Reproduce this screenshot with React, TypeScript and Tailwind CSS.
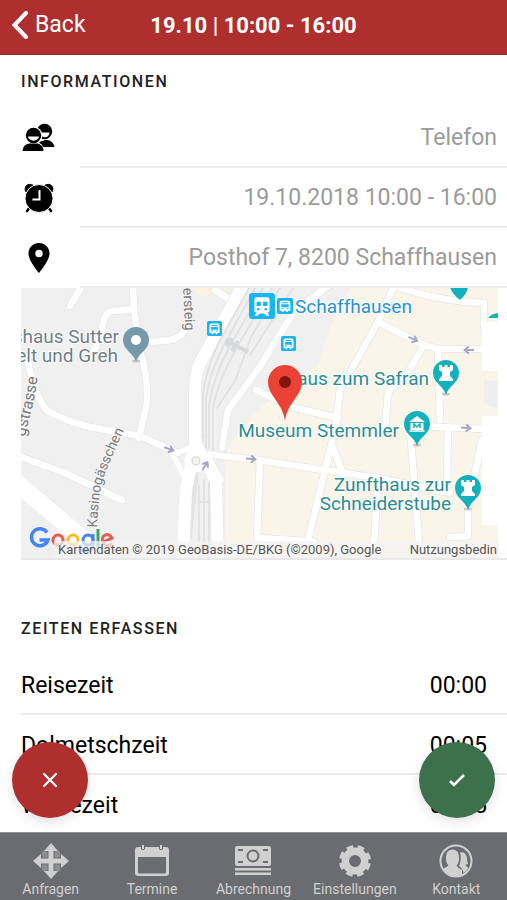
import type { ReactNode } from "react";

const fontStack = "font-['Roboto','Liberation_Sans',sans-serif]";

function GroupIcon() {
  return (
    <svg viewBox="0 0 34 30" className="h-[30px] w-[34px]" aria-hidden="true">
      <circle cx="22.500" cy="8.500" r="7.700" />
      <path d="M18.500 18.500L24 16.800q7.500 1 8.500 7.200H21q-1-3-4-4z" />
      <path d="M19 9.500h8.500c0 5-6 6-8 3z" fill="#fff" />
      <circle cx="11.500" cy="12.500" r="9" fill="#fff" />
      <path d="M0 28.500c.5-6 3.500-7.500 7-8.500h8.500c3.500 1 6.500 3 6.500 8.500z" stroke="#fff" />
      <circle cx="11.500" cy="12.500" r="7.700" />
      <path d="M6 13.500h11c-.6 5.500-10.400 5.500-11 0z" fill="#fff" />
    </svg>
  );
}

function AlarmIcon() {
  return (
    <svg viewBox="0 0 34 30" className="h-[30px] w-[34px]" aria-hidden="true">
      <path d="M4 9C1 4 6-1 11.500 2.500zM30 9C33 4 28-1 22.500 2.500z" stroke="#000" strokeLinejoin="round" />
      <path d="M8 24l-3 4M26 24l3 4" stroke="#000" strokeWidth="2.500" strokeLinecap="round" />
      <circle cx="17" cy="15.500" r="14" stroke="#fff" />
      <path d="M17.500 7v9.500h-7" fill="none" stroke="#fff" strokeWidth="2" />
    </svg>
  );
}

function PlaceIcon() {
  return (
    <svg viewBox="0 0 34 30" className="h-[30px] w-[34px]" aria-hidden="true">
      <path fillRule="evenodd" d="M17 0C11 0 6.500 4.500 6.500 10.500 6.500 18 17 30 17 30s10.500-12 10.500-19.500C27.500 4.500 23 0 17 0zm0 14.200a3.700 3.700 0 1 1 0-7.400 3.700 3.700 0 0 1 0 7.400z" />
    </svg>
  );
}

function BusSign({ x, y, size }: { x: number; y: number; size: number }) {
  return (
    <svg x={x} y={y} width={size} height={size} viewBox="0 0 24 24">
      <rect width="24" height="24" rx="3" fill="#16b6f5" />
      <path d="M7 4h10q2 0 2 2v10q0 2-2 2l2 3h-3l-2-2h-4l-2 2H5l2-3q-2 0-2-2V6q0-2 2-2z" fill="#fff" />
      <path d="M7 8h4v4H7zM13 8h4v4h-4z" fill="#16b6f5" />
      <circle cx="8.500" cy="15" r="1.200" fill="#16b6f5" />
      <circle cx="15.500" cy="15" r="1.200" fill="#16b6f5" />
    </svg>
  );
}

function StopSign({ x, y, size }: { x: number; y: number; size: number }) {
  return (
    <svg x={x} y={y} width={size} height={size} viewBox="0 0 24 24">
      <rect width="24" height="24" rx="3" fill="#16b6f5" />
      <path d="M7 4h10q3 0 3 3v12h-3l-1 2h-2v-2h-4v2H8l-1-2H4V7q0-3 3-3z" fill="#fff" />
      <path d="M7 6.500h10V8H7zM6.500 9.500h11V14h-11z" fill="#16b6f5" />
      <path d="M6.500 16h3M14.500 16h3" stroke="#16b6f5" strokeWidth="1.500" />
    </svg>
  );
}

function Marker({ x, y, color, children }: { x: number; y: number; color: string; children: ReactNode }) {
  return (
    <g transform={`translate(${x} ${y})`}>
      <ellipse cx="0" cy="21" rx="4" ry="1.500" fill="#9aa0a6" opacity="0.5" />
      <path d="M0 22C-2 13-13 10-13 0a13 13 0 0 1 26 0C13 10 2 13 0 22z" fill={color} />
      {children}
    </g>
  );
}

function Tower() {
  return <path d="M-7-8h3v2h2.500v-2h3v2H4v-2h3v5L4-1v4l3 3v2H-7V6l3-3v-4l-3-2z" fill="#fff" />;
}

const roadPaths = [
  "M82 286L70 306",
  "M133 286L134 310Q137 330 140 350Q148 375 147 402L139 438",
  "M134 309L112 311Q104 312 102 330L94 352",
  "M152 342L170 340Q182 338 186 326",
  "M28 362Q36 400 48 411Q62 420 90 427L140 436L178 453",
  "M21 457L65 473L122 500",
  "M215 290L232 301",
];

const townPaths = [
  "M394 286L378 322L340 390L336 424L330 450L306 548",
  "M378 322L424 345L438 349L482 349",
  "M424 345L407 374L388 392L385 430",
  "M438 349L440 420",
  "M395 286Q440 302 484 303V330",
  "M256 390L292 407L338 418",
  "M206 454L258 460L323 470L378 478L450 493",
  "M333 447L343 474",
  "M260 460L257 538L292 540L314 542",
  "M410 430L415 490L420 558",
  "M448 430L447 485",
  "M378 478L374 545",
  "M420 426L482 429",
  "M482 440L476 468L468 510V536L450 537",
  "M328 286L294 312L259 368L228 410L222 448",
];

function DirectionArrow({ x, y, angle }: { x: number; y: number; angle: number }) {
  return (
    <path
      d="M-5 0H4M0-3.500L4.500 0L0 3.500"
      fill="none"
      stroke="#a6a4c4"
      strokeWidth="2"
      transform={`translate(${x} ${y}) rotate(${angle})`}
    />
  );
}

function LocationMap() {
  return (
    <svg
      viewBox="21 288 478 270"
      preserveAspectRatio="xMidYMid slice"
      className="block h-[270px] w-full"
      role="img"
      aria-label="Karte: Posthof 7, 8200 Schaffhausen"
    >
      <rect x="21" y="288" width="478" height="270" fill="#f0f0f0" />
      <path d="M350 288H498V558H226V470Q222 448 240 432Q262 400 318 365Q330 320 350 288z" fill="#f9f5e8" />
      <path d="M190 288h38l-10 8-20-1z" fill="#f9f3df" />
      <path d="M484 380q8 2 14 0v28q-8 0-14-6z" fill="#eeeeee" />

      <g fill="none" strokeLinejoin="round" strokeLinecap="round">
        <g stroke="#e6e6e8" strokeWidth="8">
          {roadPaths.map((d) => <path key={d} d={d} />)}
          {townPaths.map((d) => <path key={d} d={d} />)}
        </g>
        <path d="M10 477L90 545" stroke="#fff" strokeWidth="17" />
        <g stroke="#fff" strokeWidth="6.500">
          {roadPaths.map((d) => <path key={d} d={d} />)}
          {townPaths.map((d) => <path key={d} d={d} />)}
        </g>
        <path d="M246 280L205 354Q195 368 195 390V450" stroke="#e4e4e6" strokeWidth="13" />
        <path d="M196 440L183 558M198 448L216 482L218 558" stroke="#e4e4e6" strokeWidth="13" />
        <path d="M246 280L205 354Q195 368 195 390V450" stroke="#fff" strokeWidth="12" />
        <path d="M196 440L186 490L183 558M198 448L216 482L218 558" stroke="#fff" strokeWidth="12" />
        <path d="M171 451L184 476M176 453L190 448M208 456L221 480" stroke="#fff" strokeWidth="5" />
        <circle cx="196" cy="461" r="11" fill="#fff" stroke="#fff" />
        <circle cx="196" cy="461" r="4" fill="#f7f5ec" stroke="#dcdcdc" strokeWidth="1.500" />
        <g stroke="#dfe1e3" strokeWidth="1.800">
          <path d="M249 288L219 342Q205 372 203 395V440" />
          <path d="M255 288L224 345Q209 374 206 398V448" />
          <path d="M263 288L230 346Q214 375 209 405V448" />
          <path d="M272 288L237 347Q216 385 213 410V450" />
          <path d="M280 288L251 337L236 379L217 408" />
          <path d="M293 288L257 344L250 355" />
          <path d="M199 486V558M204 480V558M209 482V558M199 502H210" />
        </g>
        <path d="M226 340L248 352M232 338L226 346M238 341L232 351" stroke="#d6d8da" strokeWidth="4" strokeLinecap="butt" />
      </g>

      <path d="M482 322H499V371H482zM482 416H499V525H482z" fill="#fff" />
      <rect x="498" y="288" width="1" height="270" fill="#fff" />
      <path d="M498 313q-7 1-10 5h10z" fill="#12b1bd" />
      <path d="M450 287h18q-1 7-8 13-8-6-10-13z" fill="#12b1bd" />

      <DirectionArrow x={169} y={449} angle={20} />
      <DirectionArrow x={205} y={466} angle={-58} />
      <DirectionArrow x={251} y={459} angle={5} />
      <DirectionArrow x={413} y={339} angle={25} />
      <DirectionArrow x={469} y={350} angle={180} />
      <DirectionArrow x={466} y={428} angle={5} />

      <defs>
        <path id="kasino-line" d="M97 528Q98 505 101 486Q104 473 124 430" />
        <path id="strasse-line" d="M25 437Q29 420 33 404Q37 388 39 362" />
      </defs>
      <g fill="#7b7b7b" fontSize="14" stroke="#f5f5f5" strokeWidth="2" paintOrder="stroke">
        <text transform="translate(183 288) rotate(87)">ersteig</text>
        <text fontSize="16"><textPath href="#strasse-line">gstrasse</textPath></text>
        <text><textPath href="#kasino-line">Kasinogässchen</textPath></text>
      </g>

      <g fontSize="19" stroke="#fff" strokeWidth="2" strokeLinejoin="round" paintOrder="stroke">
        <g fill="#6e7f8a" textAnchor="end">
          <text x="119" y="343">shaus Sutter</text>
          <text x="118" y="362">elt und Greh</text>
        </g>
        <text x="295" y="313" fill="#2793d0">Schaffhausen</text>
        <g fill="#2a8d91" textAnchor="end">
          <text x="429" y="385">Haus zum Safran</text>
          <text x="399" y="437">Museum Stemmler</text>
          <text x="451" y="491">Zunfthaus zur</text>
          <text x="451" y="510">Schneiderstube</text>
        </g>
      </g>

      <BusSign x={249} y={293} size={26} />
      <StopSign x={277} y={298} size={16} />
      <StopSign x={281} y={336} size={15} />
      <StopSign x={207} y={321} size={15} />

      <Marker x={136} y={340} color="#7599a8">
        <circle r="5" fill="#fff" />
      </Marker>
      <Marker x={446} y={373} color="#12b1bd"><Tower /></Marker>
      <Marker x={468} y={488} color="#12b1bd"><Tower /></Marker>
      <Marker x={417} y={424} color="#12b1bd">
        <path d="M-8-2L0-8l8 6zM-6.500-1h13v7h-13z" fill="#fff" />
        <path d="M-3 4V0L0 3l3-3v4" fill="none" stroke="#12b1bd" strokeWidth="1.500" />
        <path d="M-7.500 7h15" stroke="#fff" strokeWidth="1.500" />
      </Marker>

      <path d="M285 421C283 403 268 396 268 382a17 17 0 0 1 34 0C302 396 287 403 285 421z" fill="#ea4336" />
      <circle cx="285" cy="382" r="6" fill="#811411" />

      <g fill="none" strokeWidth="3">
        <path d="M47 532.500A8.500 8.500 0 1 0 48 540H39.500" stroke="#4285f4" strokeWidth="3.500" />
        <circle cx="58" cy="540" r="5" stroke="#ea5a4c" />
        <circle cx="73" cy="540" r="5" stroke="#fbbc20" />
        <path d="M93 534V546Q92 551 87 551T82 548" stroke="#4285f4" />
        <circle cx="88" cy="540" r="5" stroke="#4285f4" />
        <path d="M98 529V547" stroke="#34a853" />
        <path d="M103 542L112 538Q109 533 105 535T103 543Q107 548 112 544" stroke="#ea5a4c" />
      </g>
      <rect x="54" y="541" width="445" height="17" fill="#f3f3f3" opacity="0.75" />
      <g fill="#555" fontSize="13">
        <text x="58" y="554">Kartendaten © 2019 GeoBasis-DE/BKG (©2009), Google</text>
        <text x="497" y="554" textAnchor="end">Nutzungsbedin</text>
      </g>
    </svg>
  );
}

const details = [
  { name: "Art", value: "Telefon", icon: <GroupIcon /> },
  { name: "Zeit", value: "19.10.2018 10:00 - 16:00", icon: <AlarmIcon /> },
  { name: "Ort", value: "Posthof 7, 8200 Schaffhausen", icon: <PlaceIcon /> },
];

const times = [
  { id: "reisezeit", label: "Reisezeit", value: "00:00" },
  { id: "dolmetschzeit", label: "Dolmetschzeit", value: "00:05" },
  { id: "wartezeit", label: "Wartezeit", value: "00:05" },
];

const tabs = [
  {
    label: "Anfragen",
    icon: (
      <>
        <path d="M18 0l7 8h-4.500v7.500H28V11l8 7-8 7v-4.500h-7.500V28H25l-7 8-7-8h4.500v-7.500H8V25l-8-7 8-7v4.500h7.500V8H11z" />
        <path d="M8.500 9.500l2-2 4 1.500v5.500H9.500zM27.500 9.500l-2-2-4 1.500v5.500h5zM8.500 26.500l2 2 4-1.500v-5.500H9.500zM27.500 26.500l-2 2-4-1.500v-5.500h5z" opacity="0.35" />
      </>
    ),
  },
  {
    label: "Termine",
    icon: (
      <path fillRule="evenodd" d="M4 4h3v2q2 2 4 0V4h14v2q2 2 4 0V4h3q3 0 3 3v23q0 3-3 3H4q-3 0-3-3V7q0-3 3-3zm0 10v15q0 1.500 1.500 1.500h25Q32 30.500 32 29V14zM8 2h2v4H8zM26 2h2v4h-2z" />
    ),
  },
  {
    label: "Abrechnung",
    icon: (
      <path fillRule="evenodd" d="M2 3h32q2 0 2 2v16q0 2-2 2H2q-2 0-2-2V5q0-2 2-2zm1 3v2h5V6zm25 0v2h5V6zM3 18v2h5v-2zm25 0v2h5v-2zM18 6.500a6.500 6.500 0 1 0 0 13 6.500 6.500 0 0 0 0-13zm0 2a4.500 4.500 0 1 1 0 9 4.500 4.500 0 0 1 0-9zM0 25h36v2.500H0zM0 29.500h36V32H0z" />
    ),
  },
  {
    label: "Einstellungen",
    icon: (
      <g fill="none" stroke="currentColor">
        <circle cx="18" cy="18" r="9.700" strokeWidth="7.400" />
        <circle cx="18" cy="18" r="14" strokeWidth="4" strokeDasharray="6.500 4.496" strokeDashoffset="-2.250" />
      </g>
    ),
  },
  {
    label: "Kontakt",
    icon: (
      <>
        <circle cx="18" cy="18" r="15.500" fill="none" stroke="currentColor" strokeWidth="2" />
        <path d="M5 26q4-2.500 5.500-3.500-3-3-2.500-9 .5-7 6.500-7t6.500 7q.500 6-2.500 9 1 2 5.500 4.500V32q-6 3-12 1-4-2-7-7z" />
        <path d="M22 9.500q6-1 7 5.500 0 4 1 5.500l-2.500 1.500 2.500 3q-1 3-4.500 5-.5-4-4.500-7l1-3q1.500-6 0-10.500z" />
      </>
    ),
  },
];

export default function App() {
  return (
    <div className={`flex h-screen flex-col overflow-hidden bg-white text-black ${fontStack}`}>
      <header className="grid h-[55px] shrink-0 grid-cols-[1fr_auto_1fr] items-center border-b border-[#9c2a2a] bg-[#af2e2e] pb-1 text-white">
        <button type="button" className="flex items-center gap-[7px] pl-3 text-[23px]">
          <svg viewBox="0 0 16 28" className="h-7 w-4" aria-hidden="true">
            <path d="M14 2L2.500 14 14 26" fill="none" stroke="currentColor" strokeWidth="4" strokeLinecap="round" />
          </svg>
          Back
        </button>
        <h1 className="text-[22px] font-bold">19.10 | 10:00 - 16:00</h1>
      </header>

      <div className="relative min-h-0 flex-1">
        <main className="h-full overflow-y-auto [scrollbar-width:none]">
          <section>
            <h2 className="flex h-[53px] items-center px-[21px] text-base font-medium tracking-widest text-[#222]">INFORMATIONEN</h2>
            <dl>
              {details.map((item) => (
                <div key={item.name} className="flex h-[60px] items-center pl-[22px]">
                  <dt className="w-[58px] shrink-0" aria-label={item.name}>{item.icon}</dt>
                  <dd className="flex h-full flex-1 items-center justify-end border-b-2 border-[#ececec] pt-0.5 pr-[10px] text-[23px] text-[#9b9b9b]">
                    {item.value}
                  </dd>
                </div>
              ))}
            </dl>
            <div className="ml-[21px] border-b-2 border-[#e8e8e8] pr-2">
              <LocationMap />
            </div>
          </section>

          <section>
            <h2 className="flex h-[95px] items-center px-[21px] pt-[43px] text-base font-medium tracking-widest text-[#222]">ZEITEN ERFASSEN</h2>
            {times.map((time) => (
              <div key={time.id} className="ml-[21px] flex h-[60px] items-center justify-between border-b-2 border-[#ececec] pt-1 pr-5 text-[23px]">
                <label htmlFor={time.id}>{time.label}</label>
                <input id={time.id} type="text" defaultValue={time.value} className="w-24 bg-transparent text-right outline-none" />
              </div>
            ))}
          </section>
        </main>

        <button type="button" aria-label="Ablehnen" className="absolute bottom-[14px] left-3 flex size-[76px] items-center justify-center rounded-full bg-[#af2e2e] text-white shadow-[0_4px_12px_rgba(0,0,0,0.12)]">
          <svg viewBox="0 0 18 18" className="size-[18px]" aria-hidden="true">
            <path d="M3 3l12 12M15 3L3 15" fill="none" stroke="currentColor" strokeWidth="2.200" strokeLinecap="round" />
          </svg>
        </button>
        <button type="button" aria-label="Bestätigen" className="absolute right-3 bottom-[14px] flex size-[76px] items-center justify-center rounded-full bg-[#3c714b] text-white shadow-[0_4px_12px_rgba(0,0,0,0.12)]">
          <svg viewBox="0 0 18 18" className="size-[18px]" aria-hidden="true">
            <path d="M2 10l4 4L16 4" fill="none" stroke="currentColor" strokeWidth="2.500" />
          </svg>
        </button>
      </div>

      <nav className="grid h-[68px] shrink-0 grid-cols-5 border-t border-[#909193] bg-[#6b6c6f] text-[#d0d0d0]">
        {tabs.map((tab) => (
          <button key={tab.label} type="button" className="flex flex-col items-center pt-[10px] text-[14px] leading-[20px]">
            <svg viewBox="0 0 36 36" className="size-9" fill="currentColor" aria-hidden="true">{tab.icon}</svg>
            {tab.label}
          </button>
        ))}
      </nav>
    </div>
  );
}
